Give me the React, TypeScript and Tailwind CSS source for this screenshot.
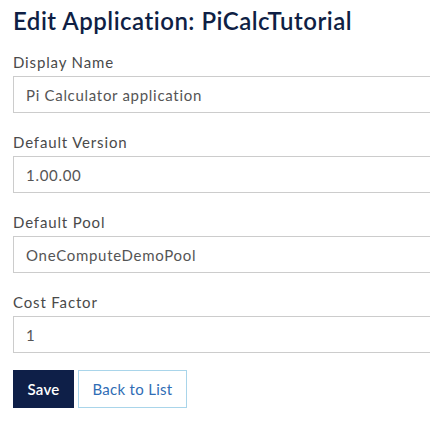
import { useState } from "react";

type Field = {
  id: string;
  label: string;
  value: string;
};

const fields: Field[] = [
  { id: "displayName", label: "Display Name", value: "Pi Calculator application" },
  { id: "defaultVersion", label: "Default Version", value: "1.00.00" },
  { id: "defaultPool", label: "Default Pool", value: "OneComputeDemoPool" },
  { id: "costFactor", label: "Cost Factor", value: "1" },
];

export default function App() {
  const [values, setValues] = useState<Record<string, string>>(
    Object.fromEntries(fields.map((f) => [f.id, f.value]))
  );

  return (
    <div className="min-h-screen overflow-hidden bg-white pl-[13px] pt-[5px] font-['Lato','Open_Sans',sans-serif]">
      <h1 className="mb-[15px] whitespace-nowrap text-[24px] leading-[32px] font-semibold tracking-[0.5px] text-[#0f1f45]">
        Edit Application: PiCalcTutorial
      </h1>

      <form onSubmit={(e) => e.preventDefault()}>
        {fields.map((f) => (
          <div key={f.id} className="mb-[19px]">
            <label htmlFor={f.id} className="mb-[4px] block text-[15px] leading-[20px] tracking-[0.85px] text-[#4a4a4a]">
              {f.label}
            </label>
            <input
              id={f.id}
              value={values[f.id]}
              onChange={(e) => setValues((p) => ({ ...p, [f.id]: e.target.value }))}
              className="block h-[37px] w-[calc(100%+20px)] border border-[#cccccc] px-[12px] text-[15px] tracking-[0.7px] text-[#555555] outline-none"
            />
          </div>
        ))}

        <div className="-mt-[2px] flex gap-[4px]">
          <button type="submit" className="h-[38px] w-[61px] bg-[#0e1f48] text-[15px] font-semibold tracking-[0.3px] text-white">
            Save
          </button>
          <a href="#" className="flex h-[38px] w-[109px] items-center justify-center border border-[#a9d5ea] text-[15px] tracking-[0.3px] text-[#2f6db5]">
            Back to List
          </a>
        </div>
      </form>
    </div>
  );
}
